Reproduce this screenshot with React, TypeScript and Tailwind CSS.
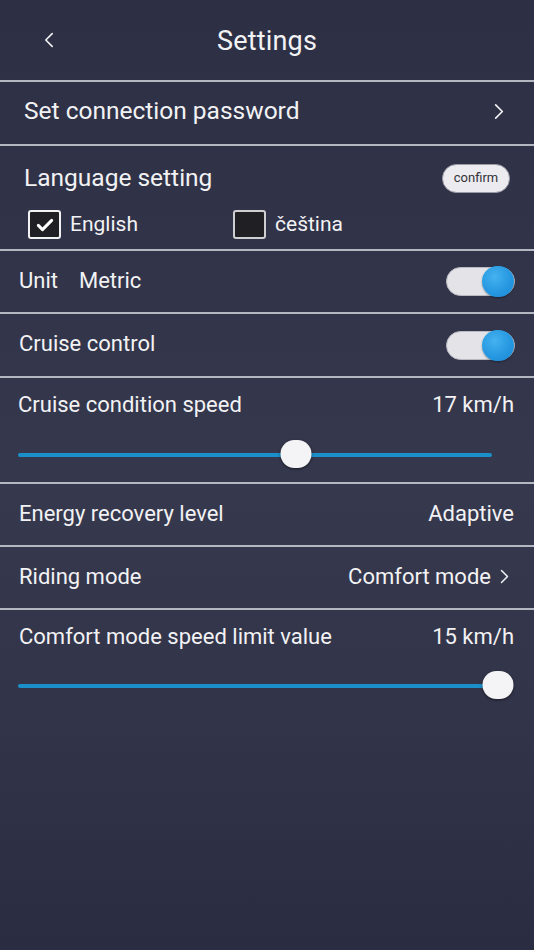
import { useState } from "react";

function Divider() {
  return <div className="h-[2px] w-full bg-[#b4b6c0]" />;
}

function Chevron({ className }: { className?: string }) {
  return (
    <svg viewBox="0 0 12 20" className={className} fill="none" stroke="currentColor" strokeWidth="2" strokeLinecap="round" strokeLinejoin="round">
      <path d="M2 2l8 8-8 8" />
    </svg>
  );
}

function Toggle() {
  return (
    <div className="flex h-[29px] w-[69px] items-center justify-end rounded-full border border-[#b9bac2] bg-[#e4e4e8]">
      <div className="h-[31px] w-[32px] rounded-full bg-[radial-gradient(circle_at_40%_35%,#45b2f0_0%,#2496e0_60%,#1a86cf_100%)] shadow-[0_1px_2px_rgba(0,0,0,0.35)]" />
    </div>
  );
}

function Slider({ percent, trackEnd }: { percent: number; trackEnd: string }) {
  return (
    <div className={`relative h-[30px] ${trackEnd}`}>
      <div className="absolute left-0 right-0 top-[13px] h-[4px] rounded-full bg-[#1a8fca]" />
      <div
        className="absolute top-0 h-[28px] w-[31px] -translate-x-1/2 rounded-full bg-[#f4f4f6] shadow-[0_1px_3px_rgba(0,0,0,0.5)]"
        style={{ left: `${percent}%` }}
      />
    </div>
  );
}

function Checkbox({ checked }: { checked: boolean }) {
  return (
    <div
      className={`flex h-[29px] w-[33px] items-center justify-center rounded-[3px] border-2 bg-[#202024] ${
        checked ? "border-[#f2f2f2]" : "border-[#cfcfd2]"
      }`}
    >
      {checked && (
        <svg viewBox="0 0 24 24" className="h-[20px] w-[20px]" fill="none" stroke="#ffffff" strokeWidth="3.6" strokeLinecap="round" strokeLinejoin="round">
          <path d="M4 12.5l5 5L20 6.5" />
        </svg>
      )}
    </div>
  );
}

export default function App() {
  const [lang] = useState("en");

  return (
    <div
      className="min-h-[950px] w-full bg-[linear-gradient(180deg,#2d2f45_0%,#313348_25%,#36394e_52%,#323449_75%,#2a2c42_100%)] text-[#f2f2f4]"
      style={{ fontFamily: "Roboto, 'Noto Sans', sans-serif" }}
    >
      {/* header */}
      <div className="relative flex h-[80px] items-center justify-center pt-[3px]">
        <Chevron className="absolute left-[44px] top-[32px] h-[16px] w-[10px] rotate-180" />
        <div className="text-[27px] tracking-[0.2px]">Settings</div>
      </div>
      <Divider />

      <div className="flex h-[62px] items-center justify-between pb-[4px] pl-[24px] pr-[30px]">
        <span className="text-[24.5px]">Set connection password</span>
        <Chevron className="h-[17px] w-[10px]" />
      </div>
      <Divider />

      {/* language */}
      <div className="h-[103px] pt-[17px]">
        <div className="flex items-center justify-between pl-[24px] pr-[24px]">
          <span className="text-[24.5px] leading-[30px]">Language setting</span>
          <button className="flex h-[29px] w-[68px] items-center justify-center rounded-full border border-[#9a9ba4] bg-[#ececf0] text-[13px] text-[#333338]">
            confirm
          </button>
        </div>
        <div className="mt-[16px] flex items-center pl-[28px]">
          <div className="flex w-[205px] items-center gap-[9px]">
            <Checkbox checked={lang === "en"} />
            <span className="text-[21px]">English</span>
          </div>
          <div className="flex items-center gap-[9px]">
            <Checkbox checked={lang === "cs"} />
            <span className="text-[21px]">čeština</span>
          </div>
        </div>
      </div>
      <Divider />

      <div className="flex h-[61px] items-center justify-between pl-[19px] pr-[19px]">
        <div className="flex gap-[21px] pb-[3px] text-[22px]">
          <span>Unit</span>
          <span>Metric</span>
        </div>
        <Toggle />
      </div>
      <Divider />

      <div className="flex h-[62px] items-center justify-between pl-[19px] pr-[19px]">
        <span className="pb-[3px] text-[22px]">Cruise control</span>
        <Toggle />
      </div>
      <Divider />

      {/* cruise speed */}
      <div className="h-[104px] pt-[13px]">
        <div className="flex items-center justify-between pl-[18px] pr-[20px] text-[22px] leading-[28px]">
          <span>Cruise condition speed</span>
          <span>17 km/h</span>
        </div>
        <div className="ml-[18px] mt-[21px]">
          <Slider percent={58.6} trackEnd="w-[474px]" />
        </div>
      </div>
      <Divider />

      <div className="flex h-[61px] items-center justify-between pb-[3px] pl-[19px] pr-[20px] text-[22px]">
        <span>Energy recovery level</span>
        <span>Adaptive</span>
      </div>
      <Divider />

      <div className="flex h-[61px] items-center justify-between pb-[3px] pl-[19px] pr-[25px] text-[22px]">
        <span>Riding mode</span>
        <span className="flex items-center gap-[9px]">
          Comfort mode
          <Chevron className="h-[15px] w-[9px]" />
        </span>
      </div>
      <Divider />

      {/* comfort speed */}
      <div className="pt-[13px]">
        <div className="flex items-center justify-between pl-[19px] pr-[20px] text-[22px] leading-[28px]">
          <span>Comfort mode speed limit value</span>
          <span>15 km/h</span>
        </div>
        <div className="ml-[18px] mt-[20px]">
          <Slider percent={100} trackEnd="w-[480px]" />
        </div>
      </div>
    </div>
  );
}
